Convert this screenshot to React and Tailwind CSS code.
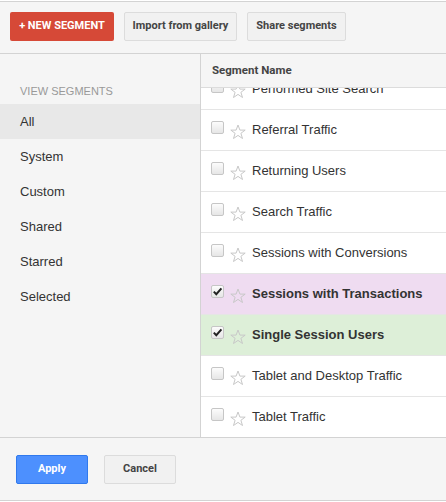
import React from 'react';

const views = ['All', 'System', 'Custom', 'Shared', 'Starred', 'Selected'];

const segments = [
  { name: 'Performed Site Search' },
  { name: 'Referral Traffic' },
  { name: 'Returning Users' },
  { name: 'Search Traffic' },
  { name: 'Sessions with Conversions' },
  { name: 'Sessions with Transactions', checked: true, bg: 'bg-[#efdcf1]' },
  { name: 'Single Session Users', checked: true, bg: 'bg-[#ddefd8]' },
  { name: 'Tablet and Desktop Traffic' },
  { name: 'Tablet Traffic' },
];

const Star = () => (
  <svg width="16" height="16" viewBox="0 0 16 16" className="mt-[4px] shrink-0">
    <polygon
      points="8,1 9.9,6.1 15.2,6.1 10.9,9.3 12.5,14.5 8,11.4 3.5,14.5 5.1,9.3 0.8,6.1 6.1,6.1"
      fill="none"
      stroke="#c8c8c8"
      strokeWidth="1"
      strokeLinejoin="round"
    />
  </svg>
);

const Checkbox = ({ checked }) => (
  <span className="mb-[6px] flex h-[13px] w-[13px] shrink-0 items-center justify-center rounded-[2px] border border-[#c6c6c6] bg-gradient-to-b from-[#fcfcfc] to-[#e6e6e6]">
    {checked && (
      <svg width="11" height="11" viewBox="0 0 11 11">
        <path d="M1.8 5.6 L4.3 8.2 L9.4 2.4" fill="none" stroke="#222" strokeWidth="2" />
      </svg>
    )}
  </span>
);

export default function App() {
  return (
    <div className="w-[446px] h-[502px] bg-white pt-px" style={{ fontFamily: '"Liberation Sans", Arial, sans-serif' }}>
      <div className="border-t border-b border-[#d3d3d3] bg-[#f5f5f5] h-[53px] pt-[10px] pl-[10px] flex gap-[10px]" style={{ fontFamily: 'Roboto, "Liberation Sans", sans-serif' }}>
        <button className="h-[29px] w-[104px] rounded-[2px] bg-[#d64937] text-[11px] font-bold text-white">
          + NEW SEGMENT
        </button>
        <button className="h-[29px] w-[113px] rounded-[2px] border border-[#dcdcdc] bg-[#f1f1f1] text-[11px] font-bold text-[#444]">
          Import from gallery
        </button>
        <button className="h-[29px] w-[99px] rounded-[2px] border border-[#dcdcdc] bg-[#f1f1f1] text-[11px] font-bold text-[#444]">
          Share segments
        </button>
      </div>

      <div className="flex h-[383px]">
        <div className="w-[201px] shrink-0 border-r border-[#d3d3d3] bg-[#f5f5f5] pt-[30px]">
          <div className="px-5 text-[11px] leading-[14px] text-[#999] mb-[6px]">VIEW SEGMENTS</div>
          {views.map((v, i) => (
            <div
              key={v}
              className={`h-[35px] flex items-center px-5 text-[13px] text-[#333] ${i === 0 ? 'bg-[#e8e8e8]' : ''}`}
            >
              {v}
            </div>
          ))}
        </div>

        <div className="flex-1 flex flex-col overflow-hidden bg-white">
          <div
            className="h-[34px] shrink-0 border-b border-[#dcdcdc] bg-[#f5f5f5] pl-[11px] flex items-center text-[11.5px] font-bold text-[#444]"
            style={{ fontFamily: 'Roboto, "Liberation Sans", sans-serif' }}
          >
            Segment Name
          </div>
          <div className="flex-1 overflow-hidden">
            <div className="-mt-[19px]">
              {segments.map((s) => (
                <div
                  key={s.name}
                  className={`h-[41px] border-b border-[#e5e5e5] flex items-center pl-[10px] ${s.bg || ''}`}
                >
                  <Checkbox checked={s.checked} />
                  <span className="ml-[6px]"><Star /></span>
                  <span className={`ml-[6px] text-[13px] whitespace-nowrap ${s.checked ? 'font-bold text-[#333]' : 'text-[#333]'}`}>
                    {s.name}
                  </span>
                </div>
              ))}
            </div>
          </div>
        </div>
      </div>

      <div className="border-t border-b border-[#d3d3d3] bg-[#f5f5f5] h-[64px] pt-[17px] pl-[16px] flex gap-[16px]" style={{ fontFamily: 'Roboto, "Liberation Sans", sans-serif' }}>
        <button className="h-[29px] w-[72px] rounded-[2px] border border-[#3079ed] bg-[#4d90fe] text-[11px] font-bold text-white">
          Apply
        </button>
        <button className="h-[29px] w-[72px] rounded-[2px] border border-[#dcdcdc] bg-[#f1f1f1] text-[11px] font-bold text-[#444]">
          Cancel
        </button>
      </div>
    </div>
  );
}
